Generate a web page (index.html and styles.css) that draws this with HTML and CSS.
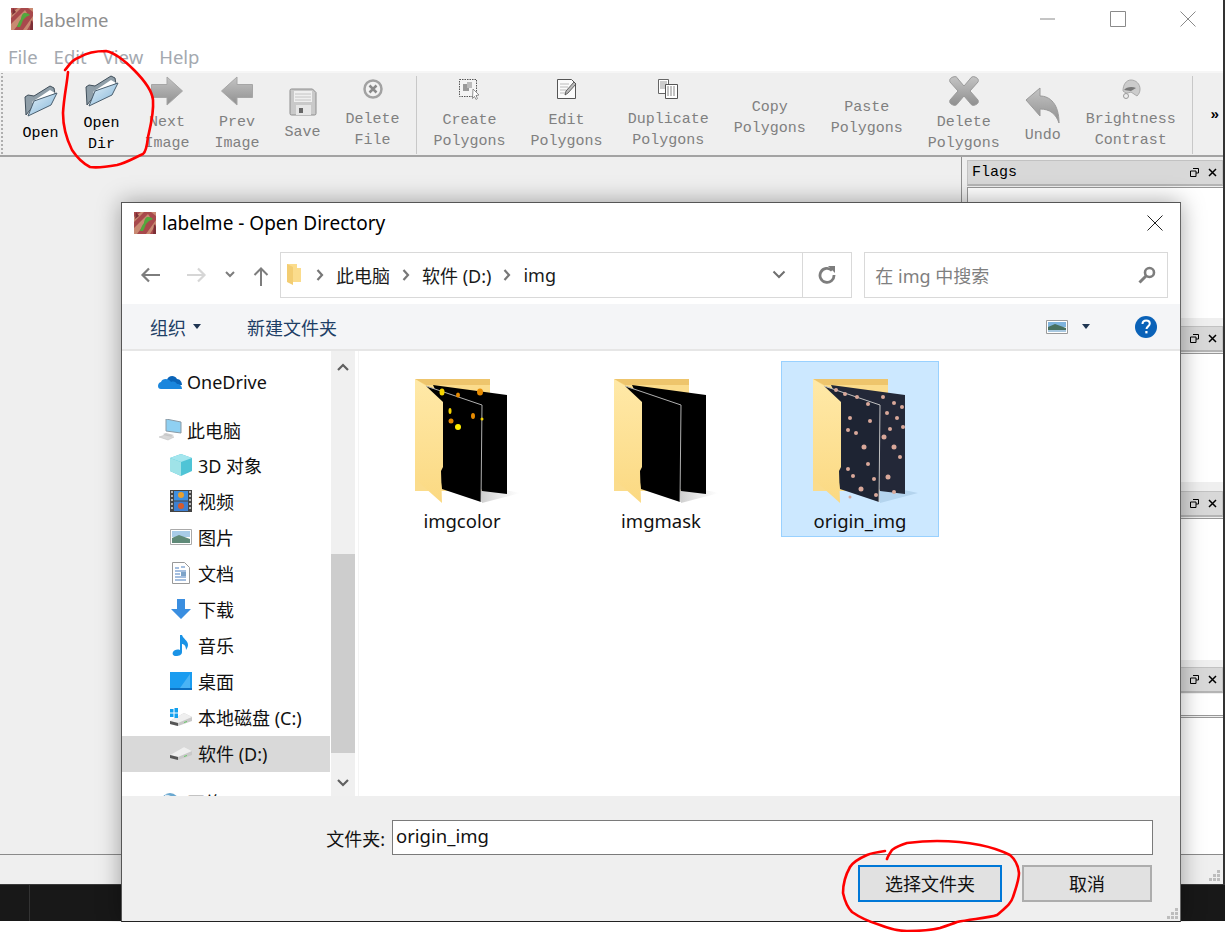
FILE: index.html
```html
<!DOCTYPE html>
<html lang="zh-CN">
<head>
  <meta charset="UTF-8">
  <title>labelme</title>
  <link rel="stylesheet" href="styles.css">
</head>
<body>

  <!-- shared icons -->
  <svg class="sprites" width="0" height="0">
    <defs>
      <linearGradient id="gFlap" x1="0" y1="0" x2="0" y2="1">
        <stop offset="0" stop-color="#ffe9a8"/><stop offset="1" stop-color="#fbd982"/>
      </linearGradient>
      <linearGradient id="gBlue" x1="0" y1="0" x2="1" y2="1">
        <stop offset="0" stop-color="#e6f2f9"/><stop offset="1" stop-color="#7fb3d8"/>
      </linearGradient>
      <linearGradient id="gGray" x1="0" y1="0" x2="0" y2="1">
        <stop offset="0" stop-color="#c4c4c4"/><stop offset="1" stop-color="#8f8f8f"/>
      </linearGradient>
      <linearGradient id="gShadow" x1="0" y1="0" x2="1" y2="0">
        <stop offset="0" stop-color="#bbb" stop-opacity=".7"/><stop offset="1" stop-color="#ccc" stop-opacity="0"/>
      </linearGradient>
    </defs>
    <symbol id="logo" viewBox="0 0 22 22">
      <rect width="22" height="22" fill="#a8494c"/>
      <path d="M0 5L7 0h3L0 10zM0 16L14 2l2 3L3 22H0zM12 22L22 8v4l-6 10zM17 0h5v4z" fill="#c98a72"/>
      <path d="M2 0l3 4-4 3zM20 12l2 3v7h-3z" fill="#7c2f36"/>
      <path d="M6 19c1-3 2-6 4-8 0-2 1-5 3-6 2 0 4 0 6 2-1 1-3 1-4 2l-3 3c-1 3-2 5-3 7z" fill="#53a83d"/>
    </symbol>
    <symbol id="openfolder" viewBox="0 0 34 32">
      <path d="M2 30L1 12l3-2 6 1L26 1l4 2 1 6L10 20z" fill="#8f9ea8" stroke="#3f4e5a"/>
      <path d="M8 17L26 5l5 3-19 13z" fill="#fff"/>
      <path d="M4 31l6-15 23-8-6 12z" fill="url(#gBlue)" stroke="#4a5e6e"/>
    </symbol>
    <symbol id="arrow" viewBox="0 0 32 30">
      <path d="M.5 8.500H16V1l15.500 14L16 29v-7.500H.5z" fill="url(#gGray)" stroke="#a6a6a6"/>
    </symbol>
    <symbol id="drive" viewBox="0 0 22 14">
      <path d="M0 9L14 1l8 4v4L8 14 0 12z" fill="#c9c9c9"/>
      <path d="M0 9l8 2 14-6-8-4z" fill="#efefef"/>
      <path d="M0 9l8 2v3l-8-2z" fill="#555"/>
      <path d="M14 10l3-1v1l-3 1z" fill="#6c6"/>
    </symbol>
    <symbol id="crumb" viewBox="0 0 8 12">
      <path d="M1.500 1l4.500 5-4.500 5" fill="none" stroke="#777" stroke-width="2.200"/>
    </symbol>
    <symbol id="caret" viewBox="0 0 8 5">
      <path d="M0 0h8L4 5z" fill="#1f3552"/>
    </symbol>
    <symbol id="titlefloat" viewBox="0 0 9 9">
      <path d="M3 .5h5.500V5H6M.5 3H6v5.500H.5z" fill="none" stroke="#000"/>
    </symbol>
    <symbol id="titleclose" viewBox="0 0 9 9">
      <path d="M1 1l7 7M8 1L1 8" stroke="#000" stroke-width="1.500"/>
    </symbol>
    <symbol id="grip" viewBox="0 0 12 12">
      <path d="M8 0h3v3H8zM4 4h3v3H4zM8 4h3v3H8zM0 8h3v3H0zM4 8h3v3H4zM8 8h3v3H8z" fill="#bdbdbd"/>
    </symbol>
    <symbol id="folderbase" viewBox="0 0 110 130">
      <path d="M1 2h75v112H1z" fill="#fbdc8c"/>
      <path d="M1 2h75v6H12z" fill="#eec56c"/>
    </symbol>
  </svg>

  <div class="screen">
    <div class="app">
      <header class="titlebar">
        <svg class="app-logo"><use href="#logo"/></svg>
        <span class="app-name">labelme</span>
        <div class="win-controls">
          <svg width="16" height="16" viewBox="0 0 16 16"><path d="M0 8h15" stroke="#8a8a8a"/></svg>
          <svg width="16" height="16" viewBox="0 0 16 16"><path d="M.5.500h15v15H.5z" fill="none" stroke="#8a8a8a"/></svg>
          <svg width="16" height="16" viewBox="0 0 16 16"><path d="M.5.500l15 15M15.500.500l-15 15" stroke="#8a8a8a"/></svg>
        </div>
      </header>

      <nav class="menubar">
        <span>File</span><span>Edit</span><span>View</span><span>Help</span>
      </nav>

      <div class="toolbar">
        <div class="tool on one-line">
          <svg class="ic32" width="34" height="32"><use href="#openfolder"/></svg>
          <span>Open</span>
        </div>
        <div class="tool on">
          <svg class="ic32" width="34" height="32"><use href="#openfolder"/></svg>
          <span>Open<br>Dir</span>
        </div>
        <div class="tool">
          <svg class="ic32" width="32" height="30"><use href="#arrow"/></svg>
          <span>Next<br>Image</span>
        </div>
        <div class="tool">
          <svg class="ic32 flip" width="32" height="30"><use href="#arrow"/></svg>
          <span>Prev<br>Image</span>
        </div>
        <div class="tool">
          <svg class="ic32" width="28" height="28" viewBox="0 0 28 28">
            <path d="M1 2.500Q1 1 2.500 1h21L27 4.500v21q0 1.500-1.500 1.500h-23Q1 27 1 25.500z" fill="#c9c9c9" stroke="#8e8e8e"/>
            <path d="M5 3h18v11H5z" fill="#efefef"/>
            <path d="M6 6h16M6 9h16M6 12h16" stroke="#c4c4c4"/>
            <path d="M7 17h15v10H7z" fill="#e6e6e6"/>
            <path d="M10 20h4v5h-4z" fill="#666"/>
          </svg>
          <span>Save</span>
        </div>
        <div class="tool">
          <svg class="ic20" width="20" height="20" viewBox="0 0 20 20">
            <circle cx="10" cy="10" r="8.500" fill="#f2f2f2" stroke="#a2a2a2" stroke-width="2.500"/>
            <path d="M6.500 6.500l7 7M13.500 6.500l-7 7" stroke="#8a8a8a" stroke-width="2.500"/>
          </svg>
          <span>Delete<br>File</span>
        </div>
        <div class="tool-sep"></div>
        <div class="tool">
          <svg class="ic20" width="24" height="22" viewBox="0 0 24 22">
            <path d="M1.500 1.500h17v17h-17z" fill="#f4f4f4" stroke="#555" stroke-dasharray="1.500 1"/>
            <path d="M5 6h6v7H5z" fill="#999"/><path d="M9 4h5v6H9z" fill="#bbb"/>
            <path d="M15 11l6 6-3 .5 1.500 3-1.500 1-1.500-3-2 2z" fill="#fff" stroke="#777" stroke-width=".8"/>
          </svg>
          <span>Create<br>Polygons</span>
        </div>
        <div class="tool">
          <svg class="ic20" width="22" height="22" viewBox="0 0 22 22">
            <path d="M1.500 1.500h14l4 4v15h-18z" fill="#fbfbfb" stroke="#555"/>
            <path d="M4 6h9M4 9h8M4 12h6M4 15h5" stroke="#bbb"/>
            <path d="M9 17l1-4 8-9 2 2-8 9z" fill="#bbb" stroke="#444" stroke-width=".8"/>
          </svg>
          <span>Edit<br>Polygons</span>
        </div>
        <div class="tool">
          <svg class="ic20" width="22" height="20" viewBox="0 0 22 20">
            <path d="M1.500.500h10v14h-10z" fill="#fff" stroke="#666"/>
            <path d="M3 3h7M3 5h7M3 7h7M3 9h7" stroke="#999"/>
            <path d="M8.500 5.500h12v14h-12z" fill="#fff" stroke="#555"/>
            <path d="M10 8h9M10 10h9M10 12h9M10 14h9M10 16h9" stroke="#888" stroke-dasharray="2 1"/>
          </svg>
          <span>Duplicate<br>Polygons</span>
        </div>
        <div class="tool no-icon">
          <span>Copy<br>Polygons</span>
        </div>
        <div class="tool no-icon">
          <span>Paste<br>Polygons</span>
        </div>
        <div class="tool">
          <svg class="ic32" width="30" height="30" viewBox="0 0 30 30">
            <path d="M4 1c3-1 4 0 5 2l6 7 6-7c1-2 3-3 5-2 3 1 4 3 3 5l-8 9 8 9c1 2 0 4-3 5-2 1-4 0-5-2l-6-7-6 7c-1 2-3 3-5 2-3-1-4-3-3-5l8-9-8-9C0 4 1 2 4 1z" fill="url(#gGray)" stroke="#9a9a9a"/>
          </svg>
          <span>Delete<br>Polygons</span>
        </div>
        <div class="tool">
          <svg class="ic-undo" width="35" height="36" viewBox="0 0 35 36">
            <path d="M1 13L15 1v8c10 0 19 8 19 27-3-9-9-14-19-14v7z" fill="url(#gGray)" stroke="#9a9a9a"/>
          </svg>
          <span>Undo</span>
        </div>
        <div class="tool">
          <svg class="ic20" width="22" height="20" viewBox="0 0 22 20">
            <path d="M11 1c5 0 9 4 9 9 0 3-1 5-3 7l-6-4-3 1c-2 0-4-1-5-2 0-6 3-11 8-11z" fill="#ccc" stroke="#aaa"/>
            <path d="M4 11c2-3 8-4 12-2l-5 3z" fill="#777"/>
            <circle cx="6" cy="17" r="2.500" fill="#eee" stroke="#999"/>
          </svg>
          <span>Brightness<br>Contrast</span>
        </div>
        <div class="tool-sep"></div>
        <span class="tool-more">»</span>
      </div>

      <div class="workspace">
        <div class="canvas"></div>
        <aside class="dock">
          <section class="dock-panel panel-flags">
            <div class="dock-title">
              <span>Flags</span>
              <svg width="9" height="9"><use href="#titlefloat"/></svg>
              <svg width="9" height="9"><use href="#titleclose"/></svg>
            </div>
            <div class="dock-body"></div>
          </section>
          <section class="dock-panel panel-labels">
            <div class="dock-title">
              <svg width="9" height="9"><use href="#titlefloat"/></svg>
              <svg width="9" height="9"><use href="#titleclose"/></svg>
            </div>
            <div class="dock-body"></div>
          </section>
          <section class="dock-panel panel-polys">
            <div class="dock-title">
              <svg width="9" height="9"><use href="#titlefloat"/></svg>
              <svg width="9" height="9"><use href="#titleclose"/></svg>
            </div>
            <div class="dock-body"></div>
          </section>
          <section class="dock-panel panel-files">
            <div class="dock-title">
              <svg width="9" height="9"><use href="#titlefloat"/></svg>
              <svg width="9" height="9"><use href="#titleclose"/></svg>
            </div>
            <div class="dock-search"></div>
            <div class="dock-body"></div>
          </section>
        </aside>
      </div>

      <footer class="statusbar">
        <svg width="12" height="12"><use href="#grip"/></svg>
      </footer>
    </div>

    <div class="taskbar"><div class="task-start"></div></div>
  </div>

  <!-- file dialog -->
  <div class="dialog">
    <div class="dlg-title">
      <svg class="app-logo"><use href="#logo"/></svg>
      <span class="dlg-name">labelme - Open Directory</span>
      <svg class="dlg-close" width="16" height="16" viewBox="0 0 16 16"><path d="M.5.500l15 15M15.500.500l-15 15" stroke="#222"/></svg>
    </div>

    <div class="dlg-nav">
      <svg class="nav-back" width="20" height="16" viewBox="0 0 20 16"><path d="M20 8H3M9 1.500L2.500 8 9 14.500" fill="none" stroke="#7d7d7d" stroke-width="2.200"/></svg>
      <svg class="nav-fwd" width="20" height="16" viewBox="0 0 20 16"><path d="M0 8h17M11 1.500L17.500 8 11 14.500" fill="none" stroke="#d6d6d6" stroke-width="2.200"/></svg>
      <svg class="nav-down" width="10" height="7" viewBox="0 0 10 7"><path d="M1 1l4 4 4-4" fill="none" stroke="#7d7d7d" stroke-width="2"/></svg>
      <svg class="nav-up" width="16" height="20" viewBox="0 0 16 20"><path d="M8 20V3M1.500 9L8 2.500 14.500 9" fill="none" stroke="#7d7d7d" stroke-width="2"/></svg>
      <div class="address">
        <svg class="addr-folder" width="15" height="21" viewBox="0 0 15 21">
          <path d="M0 0h10v4h4v14H0z" fill="#fbdc8c"/><path d="M0 0l6 3v18l-6-3z" fill="#f3cd72"/>
        </svg>
        <svg class="crumb" width="8" height="12"><use href="#crumb"/></svg>
        <span>此电脑</span>
        <svg class="crumb" width="8" height="12"><use href="#crumb"/></svg>
        <span>软件 (D:)</span>
        <svg class="crumb" width="8" height="12"><use href="#crumb"/></svg>
        <span>img</span>
        <svg class="addr-drop" width="14" height="9" viewBox="0 0 14 9"><path d="M1.500 1.500L7 7l5.500-5.500" fill="none" stroke="#6f6f6f" stroke-width="2"/></svg>
        <div class="addr-refresh">
          <svg width="18" height="18" viewBox="0 0 18 18"><path d="M14 4.500A7 7 0 1 0 16 9" fill="none" stroke="#7d7d7d" stroke-width="2.800"/><path d="M10 0h7v7z" fill="#7d7d7d"/></svg>
        </div>
      </div>
      <div class="search">
        <span>在 img 中搜索</span>
        <svg width="18" height="18" viewBox="0 0 18 18"><circle cx="11.500" cy="6.500" r="4.500" fill="none" stroke="#7d7d7d" stroke-width="2.600"/><path d="M8 10l-6.500 6.500" stroke="#7d7d7d" stroke-width="3"/></svg>
      </div>
    </div>

    <div class="dlg-tools">
      <span class="tool-link">组织</span>
      <svg class="caret-org" width="8" height="5"><use href="#caret"/></svg>
      <span class="tool-link new-folder">新建文件夹</span>
      <svg class="view-icon" width="22" height="14" viewBox="0 0 22 14">
        <path d="M.5.500h21v13H.5z" fill="#fff" stroke="#9a9a9a"/>
        <path d="M2 2h18v5H2z" fill="#7fb4dd"/><path d="M2 7l7-3 11 4v4H2z" fill="#48705f"/><path d="M2 10h18v2H2z" fill="#a8c8e0"/>
      </svg>
      <svg class="caret-view" width="8" height="5"><use href="#caret"/></svg>
      <svg class="help" width="22" height="22" viewBox="0 0 22 22"><circle cx="11" cy="11" r="11" fill="#0a62b8"/><path d="M7.500 8c0-2 1.500-3.500 3.700-3.500s3.600 1.300 3.600 3.100c0 2.800-3.300 2.700-3.300 5.400" fill="none" stroke="#fff" stroke-width="2"/><rect x="10.300" y="15" width="2.200" height="2.400" fill="#fff"/></svg>
    </div>

    <div class="dlg-main">
      <div class="nav-pane">
        <div class="nav-row top onedrive">
          <svg width="24" height="16" viewBox="0 0 24 16"><path d="M9 6c1-4 7-6 10-1 3 0 5 3 5 6H9z" fill="#0a64b8"/><path d="M3 15c-4 0-4-6 0-7 1-4 8-4 10 0 3-1 5 0 6 2 3 0 5 2 5 5z" fill="#1a86dd"/></svg>
          <span>OneDrive</span>
        </div>
        <div class="nav-row top">
          <svg width="24" height="22" viewBox="0 0 24 22">
            <path d="M8 0l15 3v11L8 12z" fill="#8fd0f2" stroke="#8a9aa5"/><path d="M5 15l3-1 8 2-6 3z" fill="#ccc"/><path d="M1 18l6-2 9 2-6 3z" fill="#d8d8d8" stroke="#bbb" stroke-width=".5"/>
          </svg>
          <span>此电脑</span>
        </div>
        <div class="nav-row">
          <svg width="22" height="22" viewBox="0 0 22 22">
            <path d="M11 0l11 4v13l-11 5L0 17V4z" fill="#4fc4d6"/><path d="M0 4l11 4 11-4-11-4z" fill="#a4e6ee"/><path d="M0 4l11 4v14L0 17z" fill="#9fe3e8"/>
          </svg>
          <span>3D 对象</span>
        </div>
        <div class="nav-row">
          <svg width="22" height="22" viewBox="0 0 22 22">
            <rect width="22" height="22" fill="#444"/><rect x="4" y="1" width="14" height="9.500" fill="#3e8fe0"/><rect x="4" y="11.500" width="14" height="9.500" fill="#3e7fd0"/>
            <circle cx="11" cy="5" r="3" fill="#e8a030"/><circle cx="11" cy="16" r="3" fill="#d85a2a"/>
            <path d="M1 2h2M1 6h2M1 10h2M1 14h2M1 18h2M19 2h2M19 6h2M19 10h2M19 14h2M19 18h2" stroke="#ddd" stroke-width="1.500"/>
          </svg>
          <span>视频</span>
        </div>
        <div class="nav-row">
          <svg width="22" height="16" viewBox="0 0 22 16">
            <path d="M.5.500h21v15H.5z" fill="#fff" stroke="#aaa"/><path d="M2 2h18v6H2z" fill="#a8cce8"/><path d="M2 9l7-3 11 4v4H2z" fill="#5f8a78"/>
          </svg>
          <span>图片</span>
        </div>
        <div class="nav-row">
          <svg width="18" height="22" viewBox="0 0 18 22">
            <path d="M.5.500h12l5 5v16H.5z" fill="#fff" stroke="#999"/><path d="M3 6h4M9 5h4M3 9h11M3 12h5M3 15h11M3 18h11" stroke="#4a7fc0"/><path d="M9 10h5v4H9z" fill="#7da3c9"/>
          </svg>
          <span>文档</span>
        </div>
        <div class="nav-row">
          <svg width="20" height="20" viewBox="0 0 20 20"><path d="M6 0h8v10h6l-10 10L0 10h6z" fill="#3a8ee0"/></svg>
          <span>下载</span>
        </div>
        <div class="nav-row">
          <svg width="18" height="22" viewBox="0 0 18 22"><path d="M8 1h2c1 4 6 5 6 10 0 2-1 3-2 5 0-4-2-6-4-6v8c0 3-3 4-6 4s-4-2-3-4 4-3 7-2z" fill="#1a93e6"/></svg>
          <span>音乐</span>
        </div>
        <div class="nav-row">
          <svg width="22" height="18" viewBox="0 0 22 18"><path d="M0 0h22v16H0z" fill="#1a9cf0"/><path d="M10 16L20 2v14z" fill="#4ab4f5"/><path d="M0 16h22v2H0z" fill="#0d6fc0"/></svg>
          <span>桌面</span>
        </div>
        <div class="nav-row">
          <svg width="22" height="18" viewBox="0 0 22 18">
            <use href="#drive" y="4" width="22" height="14"/>
            <path d="M0 1h3.500v3.500H0zM4.500 0H8v4.500H4.500zM0 5.500h3.500V9H0zM4.500 5.500H8V10H4.500z" fill="#12a0ee"/>
          </svg>
          <span>本地磁盘 (C:)</span>
        </div>
        <div class="nav-row current">
          <svg width="22" height="14"><use href="#drive"/></svg>
          <span>软件 (D:)</span>
        </div>
        <div class="nav-row top network">
          <svg width="20" height="20" viewBox="0 0 20 20"><circle cx="10" cy="10" r="9" fill="#6aa8d0"/><path d="M5 4c3 0 6 1 6 4s-5 2-6 5" stroke="#dce8f0" stroke-width="3" fill="none"/></svg>
          <span>网络</span>
        </div>
      </div>

      <div class="nav-scroll">
        <svg class="scroll-up" width="12" height="8" viewBox="0 0 12 8"><path d="M1 7l5-5 5 5" fill="none" stroke="#606060" stroke-width="2.200"/></svg>
        <div class="scroll-thumb"></div>
        <svg class="scroll-down" width="12" height="8" viewBox="0 0 12 8"><path d="M1 1l5 5 5-5" fill="none" stroke="#606060" stroke-width="2.200"/></svg>
      </div>

      <div class="files">
        <div class="file-item">
          <svg class="thumb" width="110" height="130" viewBox="0 0 110 130">
            <use href="#folderbase"/>
            <path d="M68 126l38-10-14-3H68z" fill="url(#gShadow)"/>
            <path d="M19 8l74 10v99l-25-3z" fill="#000"/>
            <path d="M12 9l56 19-1 97-39-13z" fill="#000"/>
            <path d="M12 9l56 19-1 97" fill="none" stroke="#b0b0b0"/>
            <ellipse cx="66" cy="15" rx="3" ry="3.500" fill="#e68a00"/>
            <circle cx="44" cy="50" r="3" fill="#ffee00" /><circle cx="37" cy="44" r="2.500" fill="#e68a00"/>
            <ellipse cx="28" cy="15" rx="2.500" ry="3.500" fill="#f5d400"/><ellipse cx="44" cy="18" rx="2" ry="2.500" fill="#e68a00"/>
            <ellipse cx="59" cy="39" rx="2" ry="3" fill="#e68a00"/><ellipse cx="36" cy="34" rx="1.500" ry="3" fill="#f5d400"/><circle cx="68" cy="42" r="1.500" fill="#f5d400"/>
            <path d="M1 2l11 7 17 16v65l-2 4 1 32L1 102z" fill="url(#gFlap)"/>
          </svg>
          <span>imgcolor</span>
        </div>
        <div class="file-item">
          <svg class="thumb" width="110" height="130" viewBox="0 0 110 130">
            <use href="#folderbase"/>
            <path d="M68 126l38-10-14-3H68z" fill="url(#gShadow)"/>
            <path d="M19 8l74 10v99l-25-3z" fill="#000"/>
            <path d="M12 9l56 19-1 97-39-13z" fill="#000"/>
            <path d="M12 9l56 19-1 97" fill="none" stroke="#b0b0b0"/>
            <path d="M1 2l11 7 17 16v65l-2 4 1 32L1 102z" fill="url(#gFlap)"/>
          </svg>
          <span>imgmask</span>
        </div>
        <div class="file-item selected">
          <svg class="thumb" width="110" height="130" viewBox="0 0 110 130">
            <use href="#folderbase"/>
            <path d="M68 126l38-10-14-3H68z" fill="#b4d4ee"/>
            <path d="M19 8l74 10v99l-25-3z" fill="#232838"/>
            <path d="M12 9l56 19-1 97-39-13z" fill="#1e2433"/>
            <path d="M12 9l56 19-1 97" fill="none" stroke="#c0c0c0"/>
            <g fill="#d9a89a">
              <circle cx="24" cy="13" r="2"/><circle cx="33" cy="17" r="2"/><circle cx="45" cy="20" r="2"/><circle cx="56" cy="27" r="2"/>
              <circle cx="71" cy="20" r="2"/><circle cx="82" cy="26" r="2"/><circle cx="90" cy="30" r="2"/><circle cx="38" cy="41" r="2"/>
              <circle cx="36" cy="53" r="2"/><circle cx="44" cy="56" r="2"/><circle cx="58" cy="44" r="2"/><circle cx="52" cy="70" r="2.500"/>
              <circle cx="56" cy="87" r="2"/><circle cx="36" cy="92" r="2"/><circle cx="41" cy="99" r="2"/><circle cx="62" cy="102" r="2"/>
              <circle cx="49" cy="112" r="2.500"/><circle cx="64" cy="118" r="2"/><circle cx="75" cy="36" r="2"/><circle cx="85" cy="41" r="2"/>
              <circle cx="72" cy="60" r="2.500"/><circle cx="82" cy="70" r="2.500"/><circle cx="88" cy="80" r="2"/><circle cx="76" cy="100" r="2.500"/>
              <circle cx="82" cy="115" r="2"/><circle cx="91" cy="50" r="2"/><circle cx="38" cy="120" r="1.500"/><circle cx="78" cy="52" r="2"/>
            </g>
            <path d="M1 2l11 7 17 16v65l-2 4 1 32L1 102z" fill="url(#gFlap)"/>
          </svg>
          <span>origin_img</span>
        </div>
      </div>
    </div>

    <div class="dlg-bottom">
      <div class="folder-row">
        <label for="folderName">文件夹:</label>
        <input id="folderName" type="text" value="origin_img">
      </div>
      <div class="button-row">
        <button class="primary">选择文件夹</button>
        <button>取消</button>
      </div>
      <svg class="dlg-grip" width="12" height="12"><use href="#grip"/></svg>
    </div>
  </div>

  <!-- red pen marks drawn on top of the screenshot -->
  <svg class="marks" width="1225" height="932" viewBox="0 0 1225 932">
    <path d="M65 70C70 64 72 60 80 57 88 52 98 51 106 51 116 53 126 62 134 70 144 80 152 90 153 100 154 114 150 128 148 137 147 146 146 152 143 154 134 158 126 163 117 165 106 167 96 168 90 167 82 163 76 156 72 150 66 138 63 126 63 113 64 96 67 84 68 72" />
    <path d="M885 851C878 852 872 853 867 855 858 859 853 862 850 867 845 876 843 884 843 893 845 902 848 908 852 912 862 919 870 922 880 925 890 929 898 931 907 931 920 931 932 930 940 928 946 926 952 924 957 922 972 919 988 918 997 915 1005 908 1011 904 1013 897 1016 888 1019 880 1019 873 1018 864 1015 859 1010 855 1000 850 990 847 980 845 965 842 950 841 937 841 925 841 915 842 907 843 900 845 896 847 892 850 890 853 888 856 887 859" />
  </svg>

</body>
</html>
```

FILE: styles.css
```css
* { margin: 0; padding: 0; box-sizing: border-box; }

body {
  position: relative;
  width: 1225px;
  height: 932px;
  overflow: hidden;
  background: #fff;
  font-family: 'Noto Sans', 'Noto Sans CJK SC', sans-serif;
  font-size: 18px;
  color: #111;
}

.sprites { position: absolute; }

svg { display: block; flex: none; }

.screen {
  display: flex;
  flex-direction: column;
  height: 921px;
}

/* main labelme window */
.app {
  height: 884px;
  display: flex;
  flex-direction: column;
  background: #efefef;
  border-right: 2px solid #333;
}

.titlebar {
  height: 38px;
  display: flex;
  align-items: center;
  padding-left: 11px;
  background: #fff;
}

.app-logo { width: 22px; height: 22px; }

.app-name {
  margin-left: 6px;
  font-size: 18.5px;
  color: #8f8f8f;
}

.win-controls {
  margin-left: auto;
  margin-right: 27px;
  display: flex;
  gap: 54px;
}

.menubar {
  height: 35px;
  display: flex;
  gap: 16px;
  align-items: center;
  padding: 3px 0 0 8px;
  background: #fff;
  font-size: 18.5px;
  color: #a4a9b0;
  border-bottom: 2px solid #f6f6f6;
}

.toolbar {
  height: 84px;
  display: flex;
  align-items: center;
  padding: 2px 0 0 10px;
  font-family: 'Liberation Mono', monospace;
  font-size: 15px;
  line-height: 21px;
  color: #808080;
  border-bottom: 2px solid #a3a3a3;
  background: #efefef;
  background-image: radial-gradient(#aaa 0.7px, transparent 0.8px);
  background-size: 4px 4px;
  background-repeat: repeat-y;
  background-position: 0 2px;
}

.tool {
  padding: 0 12.5px;
  display: flex;
  flex-direction: column;
  align-items: center;
  text-align: center;
}

.tool.on { color: #000; }
.tool.one-line { margin-top: -2px; }
.tool.no-icon { margin-top: 6px; }

.ic32 { margin-bottom: 6px; }
.ic20 { margin-bottom: 10px; }
.ic-undo { margin-top: 2px; margin-bottom: 2px; }
.flip { transform: scaleX(-1); }

.tool-sep {
  width: 1px;
  height: 78px;
  margin: 0 4px;
  background: #c8c8c8;
}

.tool-more {
  margin-left: 13px;
  color: #000;
  font-weight: bold;
}

.workspace {
  flex: 1;
  display: flex;
  min-height: 0;
}

.canvas { flex: 1; }

.dock {
  width: 262px;
  padding: 3px 0 0 5px;
  border-left: 1px solid #8f8f8f;
  display: flex;
  flex-direction: column;
}

.dock-panel {
  display: flex;
  flex-direction: column;
}

.panel-flags { height: 158px; margin-bottom: 8px; }
.panel-labels { height: 156px; margin-bottom: 9px; }
.panel-polys { height: 169px; margin-bottom: 7px; }
.panel-files { flex: 1; }

.dock-title {
  height: 26px;
  display: flex;
  align-items: center;
  justify-content: flex-end;
  gap: 9px;
  padding: 0 5px 0 4px;
  background: #d8d8d8;
  border: 1px solid #c2c2c2;
  border-bottom: 2px solid #b4b4b4;
  font-family: 'Liberation Mono', monospace;
  font-size: 15px;
}

.dock-title span {
  margin-right: auto;
  color: #000;
}

.dock-body {
  flex: 1;
  margin-top: 1px;
  background: #fff;
  border: 1px solid #989898;
  border-right: none;
  border-bottom: none;
}

.dock-search {
  height: 22px;
  margin-top: 1px;
  background: #fff;
  border-bottom: 1px solid #989898;
}

.statusbar {
  height: 30px;
  border-top: 1px solid #8a8a8a;
  display: flex;
  justify-content: flex-end;
  align-items: flex-end;
  padding: 0 2px 2px 0;
}

.taskbar {
  height: 37px;
  background: #181818;
  border-top: 1px solid #3a3a3a;
}

.task-start {
  width: 30px;
  height: 100%;
  border-right: 1px solid #333;
}

/* directory dialog, sits over the main window */
.dialog {
  position: absolute;
  left: 121px;
  top: 202px;
  width: 1060px;
  height: 720px;
  display: flex;
  flex-direction: column;
  background: #fff;
  border: 1px solid #555;
  border-right-color: #666;
  border-bottom-color: #222;
  box-shadow: 0 0 22px rgba(0, 0, 0, 0.35);
  clip-path: inset(-30px -30px 0 -30px);
}

.dlg-title {
  height: 38px;
  flex: none;
  display: flex;
  align-items: center;
  padding: 1px 17px 0 12px;
}

.dlg-name {
  margin-left: 6px;
  font-size: 19px;
  color: #000;
  margin-right: auto;
}

.dlg-nav {
  height: 63px;
  flex: none;
  display: flex;
  align-items: center;
  padding: 4px 12px 0 18px;
}

.nav-fwd { margin-left: 27px; }
.nav-down { margin-left: 18px; }
.nav-up { margin-left: 18px; margin-top: 3px; }

.address {
  width: 573px;
  height: 46px;
  margin-left: 11px;
  display: flex;
  align-items: center;
  border: 1px solid #d9d9d9;
  padding-left: 6px;
  color: #1a1a1a;
  gap: 12px;
}

.addr-folder { margin-right: 2px; }
.addr-drop { margin-left: auto; margin-right: 8px; }

.addr-refresh {
  width: 49px;
  height: 100%;
  margin-left: -4px;
  display: flex;
  align-items: center;
  justify-content: center;
  border-left: 1px solid #d9d9d9;
}

.search {
  width: 304px;
  height: 46px;
  margin-left: 12px;
  display: flex;
  align-items: center;
  justify-content: space-between;
  padding: 0 11px 0 10px;
  border: 1px solid #d9d9d9;
  color: #7f7f7f;
}

.dlg-tools {
  height: 47px;
  flex: none;
  display: flex;
  align-items: center;
  padding-left: 28px;
  background: #f4f5f7;
  border-bottom: 2px solid #e6e6e6;
}

.tool-link {
  color: #1e3f66;
}

.caret-org { margin-left: 7px; }
.new-folder { margin-left: 46px; }
.view-icon { margin-left: auto; }
.caret-view { margin-left: 14px; }
.help { margin: 0 23px 0 45px; }

.dlg-main {
  flex: 1;
  min-height: 0;
  display: flex;
}

.nav-pane {
  width: 208px;
  flex: none;
  padding-top: 13px;
  overflow: hidden;
}

.nav-row {
  height: 36px;
  display: grid;
  grid-template-columns: 22px auto;
  justify-items: center;
  justify-content: start;
  align-items: center;
  column-gap: 6px;
  padding: 0 0 2px 48px;
  color: #111;
}

.nav-row.top {
  grid-template-columns: 24px auto;
  column-gap: 5px;
  padding: 0 0 0 36px;
}

.nav-row.onedrive { margin-bottom: 12px; }
.nav-row.network { margin-top: 12px; }
.nav-row.current { background: #d9d9d9; }

.nav-scroll {
  width: 24px;
  flex: none;
  margin-left: 1px;
  display: flex;
  flex-direction: column;
  align-items: center;
  background: #f0f0f0;
  padding-top: 12px;
}

.scroll-thumb {
  width: 100%;
  height: 199px;
  margin-top: 183px;
  background: #cdcdcd;
}

.scroll-down { margin-top: 26px; }

.files {
  flex: 1;
  display: flex;
  align-items: flex-start;
  gap: 41px;
  margin-left: 3px;
  padding: 10px 0 0 24px;
  border-left: 1px solid #f4f4f4;
}

.file-item {
  width: 158px;
  height: 176px;
  display: flex;
  flex-direction: column;
  align-items: center;
  border: 1px solid transparent;
  color: #111;
}

.file-item.selected {
  background: #cce8ff;
  border-color: #99d1ff;
}

.thumb {
  margin: 15px 0 0 14px;
}

.file-item span {
  margin-top: 2px;
  line-height: 24px;
  font-size: 18.5px;
}

.dlg-bottom {
  position: relative;
  height: 125px;
  flex: none;
  background: #efefef;
  padding-top: 24px;
}

.folder-row {
  display: flex;
  align-items: center;
  justify-content: flex-end;
  gap: 7px;
  padding-right: 27px;
}

.folder-row input {
  width: 761px;
  height: 35px;
  padding: 0 3px 5px;
  border: 1px solid #7a7a7a;
  background: #fff;
  font: inherit;
  font-size: 18.5px;
  color: #111;
  outline: none;
}

.button-row {
  display: flex;
  justify-content: flex-end;
  gap: 20px;
  margin-top: 10px;
  padding-right: 28px;
}

.button-row button {
  width: 130px;
  height: 37px;
  padding-bottom: 2px;
  background: #e1e1e1;
  border: 2px solid #adadad;
  font: inherit;
  color: #111;
}

.button-row .primary {
  width: 144px;
  border-color: #0078d7;
}

.dlg-grip {
  position: absolute;
  right: 1px;
  bottom: 1px;
}

/* pen annotation layer */
.marks {
  position: absolute;
  left: 0;
  top: 0;
  pointer-events: none;
}

.marks path {
  fill: none;
  stroke: #f00;
  stroke-width: 2.6;
  stroke-linecap: round;
  stroke-linejoin: round;
}
```
